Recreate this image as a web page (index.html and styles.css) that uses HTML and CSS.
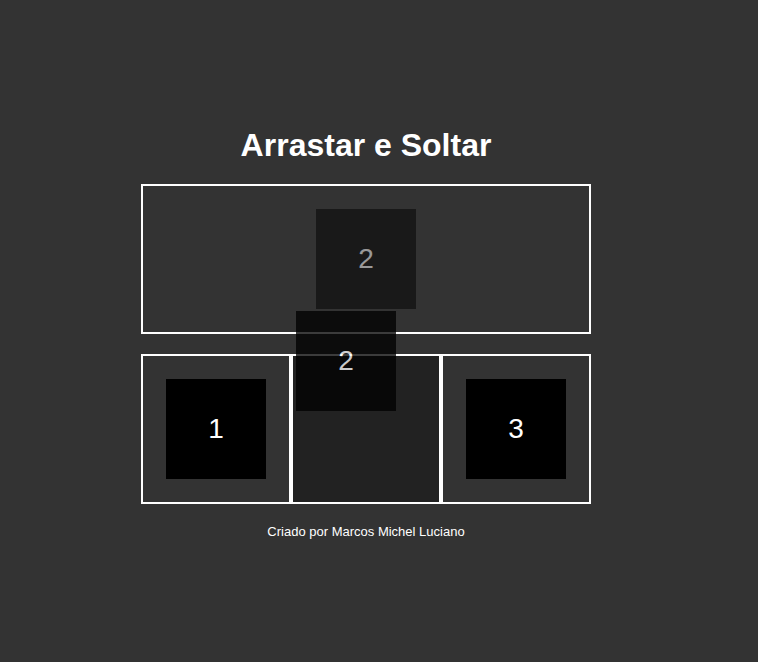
FILE: index.html
```html
<!DOCTYPE html>
<html lang="pt-BR">
<head>
<meta charset="utf-8">
<title>Arrastar e Soltar</title>
<link rel="stylesheet" href="styles.css">
</head>
<body>
<div class="page">
  <h1 class="title">Arrastar e Soltar</h1>
  <div class="board">
    <div class="zone zone-top">
      <div class="tile tile-placeholder">2</div>
    </div>
    <div class="row">
      <div class="zone cell"><div class="tile">1</div></div>
      <div class="zone cell cell-over"></div>
      <div class="zone cell"><div class="tile">3</div></div>
    </div>
  </div>
  <p class="credit">Criado por Marcos Michel Luciano</p>
</div>
<div class="tile tile-ghost">2</div>
</body>
</html>
```
FILE: styles.css
```css
html, body {
  margin: 0;
  padding: 0;
  background: #333333;
  font-family: "Liberation Sans", Arial, sans-serif;
  color: #ffffff;
}

.page {
  width: 732px;
  padding-top: 127px;
}

.title {
  margin: 0;
  font-size: 32px;
  line-height: 37px;
  font-weight: bold;
  text-align: center;
}

.board {
  width: 450px;
  margin: 20px auto 0;
}

.zone {
  box-sizing: border-box;
  border: 2px solid #ffffff;
  display: flex;
  align-items: center;
  justify-content: center;
}

.zone-top {
  height: 150px;
}

.row {
  display: flex;
  margin-top: 20px;
}

.cell {
  width: 150px;
  height: 150px;
}

.cell-over {
  background: #222222;
}

.tile {
  width: 100px;
  height: 100px;
  background: #000000;
  color: #ffffff;
  font-size: 28px;
  display: flex;
  align-items: center;
  justify-content: center;
}

.tile-placeholder {
  opacity: 0.5;
}

.tile-ghost {
  position: absolute;
  left: 296px;
  top: 311px;
  opacity: 0.76;
}

.credit {
  margin: 20px 0 0;
  font-size: 13px;
  line-height: 15px;
  text-align: center;
}
```
